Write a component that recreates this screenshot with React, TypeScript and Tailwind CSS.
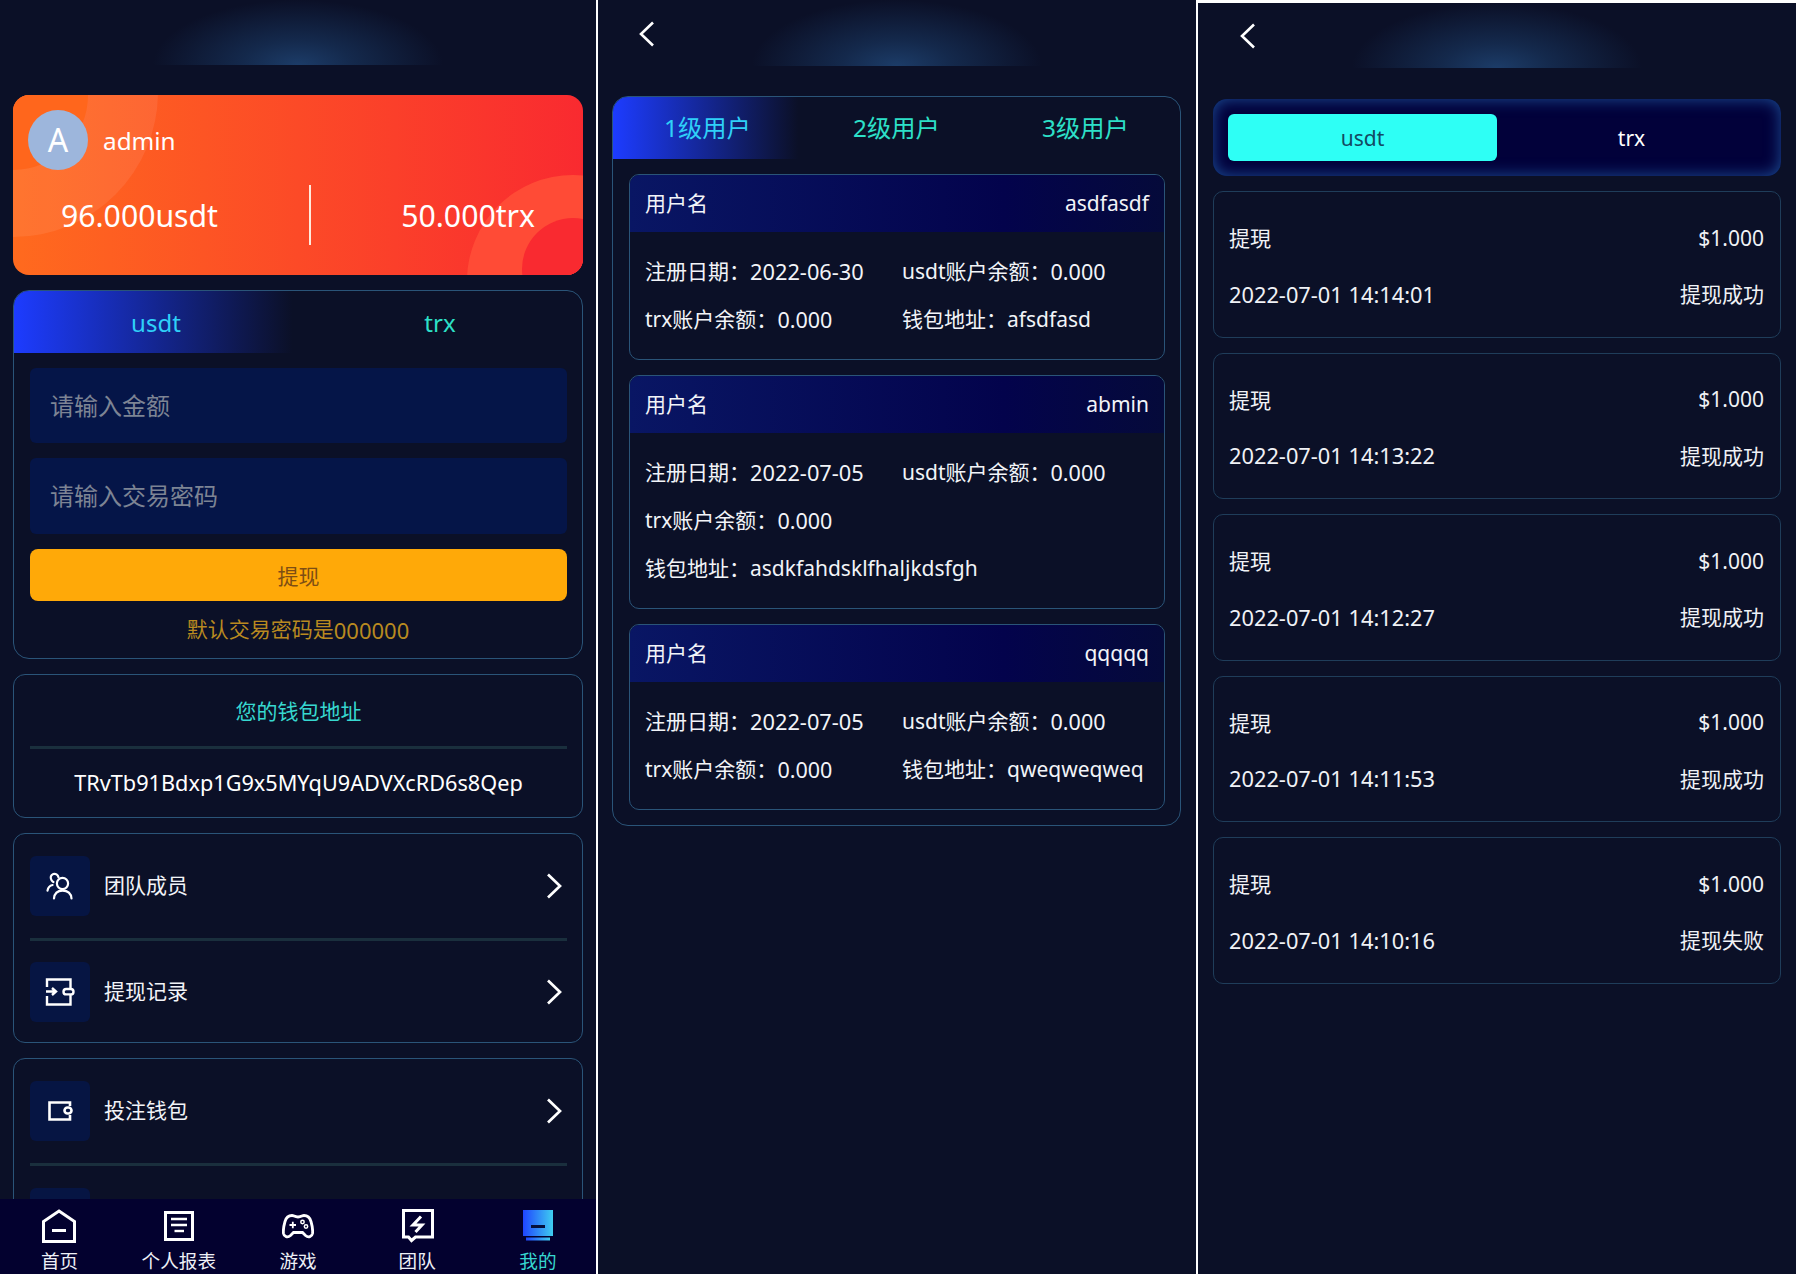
import React from "react";

const Chevron = () => (
  <svg width="16" height="26" viewBox="0 0 16 26" className="shrink-0">
    <path d="M2 1.5 L14 13 L2 24.5" fill="none" stroke="#fff" strokeWidth="2.7" />
  </svg>
);
const BackChevron = () => (
  <svg width="16" height="26" viewBox="0 0 16 26">
    <path d="M14 1.5 L2 13 L14 24.5" fill="none" stroke="#fff" strokeWidth="2.6" />
  </svg>
);

const TeamIcon = () => (
  <svg width="28" height="28" viewBox="0 0 28 28" fill="none" stroke="#fff" strokeWidth="2.2" strokeLinecap="round">
    <circle cx="16.5" cy="11.5" r="5.6" />
    <path d="M8 26.5 C8.5 21 12 18.6 16.5 18.6 C21 18.6 25 21 25.5 26.5" />
    <path d="M12.5 5.2 C12 2.8 9.5 1.2 7.3 2 C4.8 2.9 4 5.6 5.4 8 C6 9 6.6 9.6 7.4 10" />
    <path d="M1.5 18.6 C2 15.6 4 13.6 6.6 13" />
  </svg>
);
const RecordIcon = () => (
  <svg width="30" height="28" viewBox="0 0 30 28" fill="none" stroke="#fff" strokeWidth="2.4">
    <path d="M2 9 V1.5 H25.5 V10 M25.5 17 V26.5 H2 V18" />
    <path d="M1 13.5 H10 M7 10 L11 13.5 L7 17" />
    <rect x="18.5" y="11" width="10" height="5.4" rx="2.7" />
  </svg>
);
const WalletIcon = () => (
  <svg width="25" height="20" viewBox="0 0 25 20" fill="none" stroke="#fff" strokeWidth="2.6">
    <path d="M22 5 V1.5 H1.5 V18.5 H22 V14" />
    <rect x="16.5" y="6.5" width="7" height="6" rx="3" />
  </svg>
);

const HomeIcon = () => (
  <svg width="34" height="34" viewBox="0 0 34 34" fill="none" stroke="#fff" strokeWidth="3" className="mr-[2px]">
    <path d="M17 2 L32.5 12.5 V32.5 H1.5 V12.5 Z" />
    <path d="M10 21.5 H24" />
  </svg>
);
const ReportIcon = () => (
  <svg width="30" height="30" viewBox="0 0 30 30" fill="none" stroke="#fff">
    <rect x="1.5" y="1.5" width="27" height="27" strokeWidth="3" />
    <path d="M7 8 H23 M7 14 H23" strokeWidth="2.4" />
    <path d="M10.5 20 H20" strokeWidth="2.4" />
  </svg>
);
const GameIcon = () => (
  <svg width="32" height="26" viewBox="0 0 32 26" fill="none" stroke="#fff">
    <path
      d="M10 2.5 C12 2.5 12.5 4 16 4 C19.5 4 20 2.5 22 2.5 C26 2.5 28 5 29 8.5 C30 12 31 17 30.5 20.5 C30 23.5 26.5 25 23.5 22.5 L20.5 19.5 H11.5 L8.5 22.5 C5.5 25 2 23.5 1.5 20.5 C1 17 2 12 3 8.5 C4 5 6 2.5 10 2.5 Z"
      strokeWidth="2.8"
    />
    <path d="M7.5 12 H14 M10.8 8.8 V15.2" strokeWidth="1.8" />
    <circle cx="20.5" cy="9" r="1.7" strokeWidth="1.5" />
    <circle cx="24" cy="13.5" r="1.7" strokeWidth="1.5" />
  </svg>
);
const BoltIcon = () => (
  <svg width="32" height="34" viewBox="0 0 32 34" fill="none" stroke="#fff" className="ml-[2px]">
    <path d="M1.5 1.5 H30.5 V28 H13.5 L9.5 31.5 L6.5 28 H1.5 Z" strokeWidth="3" />
    <path d="M19 7.5 L11 16 H20 L13.5 23" strokeWidth="3" strokeLinejoin="miter" />
  </svg>
);
const MineIcon = () => (
  <svg width="30" height="32" viewBox="0 0 30 32" className="ml-[1px]">
    <defs>
      <linearGradient id="mine" x1="0" x2="1" y1="0" y2="0">
        <stop offset="0" stopColor="#1f45ff" />
        <stop offset="1" stopColor="#3fcdf0" />
      </linearGradient>
    </defs>
    <rect x="0" y="0" width="30" height="26" fill="url(#mine)" />
    <rect x="8" y="15" width="14" height="3" fill="#05103c" />
    <rect x="3" y="27.5" width="24" height="3" fill="url(#mine)" />
  </svg>
);

const Glow = () => (
  <div className="mx-auto h-full w-[290px] bg-[radial-gradient(ellipse_50%_100%_at_50%_100%,#1c3c68_0%,#14294c_38%,transparent_100%)]" />
);

const Divider = () => <div className="h-[3px] bg-[#1a2f3d]" />;

function MenuRow({ icon, label, h }: { icon?: React.ReactNode; label?: string; h: string }) {
  return (
    <div className={`flex items-center justify-between pr-[5px] ${h}`}>
      <div className="flex items-center gap-[14px]">
        <div className="flex h-[60px] w-[60px] items-center justify-center rounded-[6px] bg-[#061543]">{icon}</div>
        {label && <span className="text-[21px] text-[#f2f4f8]">{label}</span>}
      </div>
      {label && <Chevron />}
    </div>
  );
}

function NavItem({ icon, label, active }: { icon: React.ReactNode; label: string; active?: boolean }) {
  return (
    <div className={`flex flex-col items-center ${active ? "pl-[3px]" : ""}`}>
      <div className="flex h-[36px] items-center justify-center">{icon}</div>
      <span className={`mt-[5px] text-[18.6px] leading-[24px] ${active ? "text-[#37d8d0]" : "text-[#eef0f6]"}`}>{label}</span>
    </div>
  );
}

function MinePanel() {
  return (
    <div className="flex h-full w-[596px] shrink-0 flex-col bg-[#0b1027]">
      <div className="min-h-0 flex-1 overflow-hidden">
        <div className="h-[95px]">
          <div className="h-[65px]">
            <Glow />
          </div>
        </div>
        <div className="flex flex-col px-[13px]">
          <div className="relative flex h-[180px] flex-col overflow-hidden rounded-[16px] bg-[linear-gradient(90deg,#ff6a1e,#f92a30)] text-white">
            <div className="absolute left-[-145px] top-[-148px] h-[290px] w-[290px] rounded-full bg-white/8" />
            <div className="absolute left-[-75px] top-[-75px] h-[150px] w-[150px] rounded-full bg-[#ff661c]" />
            <div className="absolute left-[454px] top-[80px] h-[212px] w-[212px] rounded-full bg-[#ff4b36]" />
            <div className="absolute left-[509px] top-[123px] h-[102px] w-[102px] rounded-full bg-[#f92a30]" />
            <div className="relative flex items-center gap-[15px] pl-[15px] pt-[15px]">
              <div className="flex h-[60px] w-[60px] items-center justify-center rounded-full bg-[#9db6dc] text-[32px] leading-none">A</div>
              <span className="pt-[2px] text-[24.3px]">admin</span>
            </div>
            <div className="relative mt-[15px] flex h-[60px] items-center justify-between px-[48px]">
              <span className="pt-[1px] text-[30.2px]">96.000usdt</span>
              <div className="h-full w-[2px] bg-[#ffe9dc]" />
              <span className="pt-[1px] text-[30.2px]">50.000trx</span>
            </div>
          </div>

          <div className="mt-[15px] h-[369px] overflow-hidden rounded-[16px] border border-[#2a5478]">
            <div className="grid h-[62px] grid-cols-2 text-[24px]">
              <div className="flex items-center justify-center bg-[linear-gradient(90deg,#1d3cff,#0b1027_98%)] pt-[1px] text-[#2fd0f8]">usdt</div>
              <div className="flex items-center justify-center pt-[1px] text-[#2de0c8]">trx</div>
            </div>
            <div className="flex flex-col gap-[15px] pl-[16px] pr-[15px] pt-[15px]">
              <div className="flex h-[75px] items-center rounded-[6px] bg-[#051548] pl-[20px] text-[24px] text-[#7d8494]">请输入金额</div>
              <div className="flex h-[76px] items-center rounded-[6px] bg-[#051548] pl-[20px] text-[24px] text-[#7d8494]">请输入交易密码</div>
              <div className="flex h-[52px] items-center justify-center rounded-[8px] bg-[#ffa908] pt-[3px] text-[21px] text-[#7d4e14]">提现</div>
            </div>
            <div className="flex h-[57px] items-center justify-center pt-[1px] text-[21px] text-[#b98a20]">
              默认交易密码是<span className="text-[22px]">000000</span>
            </div>
          </div>

          <div className="mt-[15px] h-[144px] rounded-[12px] border border-[#2a5478] pl-[16px] pr-[15px]">
            <div className="flex h-[71px] items-center justify-center pt-[2px] text-[21px] text-[#37d8d0]">您的钱包地址</div>
            <Divider />
            <div className="flex h-[68px] items-center justify-center pt-[1px] text-[21.7px] text-white">TRvTb91Bdxp1G9x5MYqU9ADVXcRD6s8Qep</div>
          </div>

          <div className="mt-[15px] rounded-[12px] border border-[#2a5478] pl-[16px] pr-[15px]">
            <MenuRow icon={<TeamIcon />} label="团队成员" h="h-[104px]" />
            <Divider />
            <MenuRow icon={<RecordIcon />} label="提现记录" h="h-[101px]" />
          </div>

          <div className="mt-[15px] rounded-[12px] border border-[#2a5478] pl-[16px] pr-[15px]">
            <MenuRow icon={<WalletIcon />} label="投注钱包" h="h-[104px]" />
            <Divider />
            <MenuRow h="h-[104px]" />
          </div>
        </div>
      </div>
      <div className="grid h-[75px] shrink-0 grid-cols-5 bg-[#03012f] pt-[9px]">
        <NavItem icon={<HomeIcon />} label="首页" />
        <NavItem icon={<ReportIcon />} label="个人报表" />
        <NavItem icon={<GameIcon />} label="游戏" />
        <NavItem icon={<BoltIcon />} label="团队" />
        <NavItem icon={<MineIcon />} label="我的" active />
      </div>
    </div>
  );
}

type User = { name: string; date: string; wallet: string };

function UserCard({ u }: { u: User }) {
  return (
    <div className="overflow-hidden rounded-[10px] border border-[#2a5478]">
      <div className="flex h-[57px] items-center justify-between bg-[linear-gradient(90deg,#091664,#03034c_70%,#050a3a)] px-[15px] text-[21px] text-[#f2f4f8]">
        <span>用户名</span>
        <span>{u.name}</span>
      </div>
      <div className="flex flex-wrap pb-[15px] pl-[15px] pt-[16px] text-[21px] text-[#f2f4f8]">
        <div className="flex h-[48px] min-w-[257px] items-center">
          注册日期：<span className="text-[21.8px]">{u.date}</span>
        </div>
        <div className="flex h-[48px] min-w-[257px] items-center">
          usdt账户余额：<span className="text-[21.5px]">0.000</span>
        </div>
        <div className="flex h-[48px] min-w-[257px] items-center">
          trx账户余额：<span className="text-[21.5px]">0.000</span>
        </div>
        <div className="flex h-[48px] items-center">钱包地址：{u.wallet}</div>
      </div>
    </div>
  );
}

function TeamPanel() {
  const users: User[] = [
    { name: "asdfasdf", date: "2022-06-30", wallet: "afsdfasd" },
    { name: "abmin", date: "2022-07-05", wallet: "asdkfahdsklfhaljkdsfgh" },
    { name: "qqqqq", date: "2022-07-05", wallet: "qweqweqweq" },
  ];
  return (
    <div className="h-full w-[598px] shrink-0 bg-[#0b1027] pl-[14px] pr-[15px]">
      <div className="relative -ml-[14px] -mr-[15px] h-[96px]">
        <div className="h-[66px]">
          <Glow />
        </div>
        <div className="absolute left-[41px] top-[21px]">
          <BackChevron />
        </div>
      </div>
      <div className="overflow-hidden rounded-[16px] border border-[#2a5478] pb-[15px]">
        <div className="grid h-[62px] grid-cols-3 text-[24.3px] text-[#2de0c8]">
          <div className="flex items-center justify-center bg-[linear-gradient(90deg,#1d3cff,#0b1027_98%)] pt-[1px] text-[#2fd0f8]">1级用户</div>
          <div className="flex items-center justify-center pt-[1px]">2级用户</div>
          <div className="flex items-center justify-center pt-[1px]">3级用户</div>
        </div>
        <div className="mt-[15px] flex flex-col gap-[15px] pl-[16px] pr-[15px]">
          {users.map((u) => (
            <UserCard key={u.name} u={u} />
          ))}
        </div>
      </div>
    </div>
  );
}

function RecordsPanel() {
  const rows = [
    ["2022-07-01 14:14:01", "提现成功"],
    ["2022-07-01 14:13:22", "提现成功"],
    ["2022-07-01 14:12:27", "提现成功"],
    ["2022-07-01 14:11:53", "提现成功"],
    ["2022-07-01 14:10:16", "提现失败"],
  ];
  return (
    <div className="mt-[3px] h-[1271px] min-w-0 flex-1 bg-[#0b1027] pl-[15px] pr-[15px]">
      <div className="relative -mx-[15px] h-[96px]">
        <div className="h-[65px]">
          <Glow />
        </div>
        <div className="absolute left-[42px] top-[20px]">
          <BackChevron />
        </div>
      </div>
      <div className="grid h-[77px] grid-cols-2 rounded-[14px] bg-[#02013a] px-[15px] py-[15px] text-[21px] shadow-[inset_0_0_16px_#1c4f96]">
        <div className="flex items-center justify-center rounded-[6px] bg-[#2efff5] pt-[3px] text-[#134a62]">usdt</div>
        <div className="flex items-center justify-center pt-[3px] text-white">trx</div>
      </div>
      <div className="mt-[15px] flex flex-col gap-[15px]">
        {rows.map(([time, state]) => (
          <div key={time} className="flex h-[146.5px] flex-col gap-[24px] rounded-[10px] border border-[#1f3d5a] pl-[15px] pr-[16px] pt-[31px] text-[21px] text-[#f0f2f6]">
            <div className="flex h-[32px] items-center justify-between">
              <span>提現</span>
              <span className="-mt-[1px]">$1.000</span>
            </div>
            <div className="flex h-[32px] items-center justify-between">
              <span className="text-[21.8px]">{time}</span>
              <span>{state}</span>
            </div>
          </div>
        ))}
      </div>
    </div>
  );
}

export default function App() {
  return (
    <div className="flex h-[1274px] w-full gap-[2px] overflow-hidden bg-white font-['Noto_Sans','Noto_Sans_CJK_SC',sans-serif]">
      <MinePanel />
      <TeamPanel />
      <RecordsPanel />
    </div>
  );
}
